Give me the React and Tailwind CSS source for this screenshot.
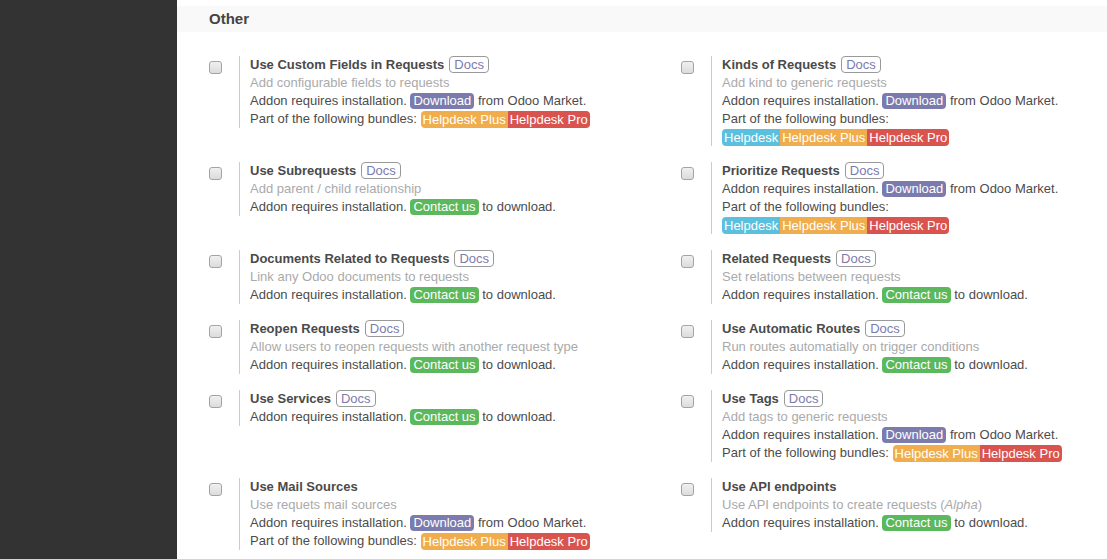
import React from "react";

const bundleColors = {
  "Helpdesk": "bg-[#5bc0de]",
  "Helpdesk Plus": "bg-[#f0ad4e]",
  "Helpdesk Pro": "bg-[#d9534f]",
};

const items = [
  [
    { title: "Use Custom Fields in Requests", docs: true, desc: "Add configurable fields to requests", install: "download", bundles: ["Helpdesk Plus", "Helpdesk Pro"] },
    { title: "Kinds of Requests", docs: true, desc: "Add kind to generic requests", install: "download", bundles: ["Helpdesk", "Helpdesk Plus", "Helpdesk Pro"] },
  ],
  [
    { title: "Use Subrequests", docs: true, desc: "Add parent / child relationship", install: "contact" },
    { title: "Prioritize Requests", docs: true, install: "download", bundles: ["Helpdesk", "Helpdesk Plus", "Helpdesk Pro"] },
  ],
  [
    { title: "Documents Related to Requests", docs: true, desc: "Link any Odoo documents to requests", install: "contact" },
    { title: "Related Requests", docs: true, desc: "Set relations between requests", install: "contact" },
  ],
  [
    { title: "Reopen Requests", docs: true, desc: "Allow users to reopen requests with another request type", install: "contact" },
    { title: "Use Automatic Routes", docs: true, desc: "Run routes automatially on trigger conditions", install: "contact" },
  ],
  [
    { title: "Use Services", docs: true, install: "contact" },
    { title: "Use Tags", docs: true, desc: "Add tags to generic requests", install: "download", bundles: ["Helpdesk Plus", "Helpdesk Pro"] },
  ],
  [
    { title: "Use Mail Sources", desc: "Use requets mail sources", install: "download", bundles: ["Helpdesk Plus", "Helpdesk Pro"] },
    { title: "Use API endpoints", desc: <>Use API endpoints to create requests (<i>Alpha</i>)</>, install: "contact" },
  ],
];

function Checkbox() {
  return (
    <span className="block w-[13px] h-[13px] rounded-[3px] border border-[#a3a3a3] bg-gradient-to-b from-[#f0f0f0] to-[#dcdcdc]" />
  );
}

function SettingBox({ item }) {
  return (
    <div className="flex items-start">
      <div className="w-[30px] shrink-0 pt-[5px]">
        <Checkbox />
      </div>
      <div className="border-l border-[#cccccc] pl-[10px] leading-[18px]">
        <div>
          <span className="font-bold text-[#4a4a4a]">{item.title}</span>
          {item.docs && (
            <span className="ml-[5px] inline-block border border-[#999] rounded-[4px] px-[4px] leading-[15px] text-[#7c7bad]">
              Docs
            </span>
          )}
        </div>
        {item.desc && <div className="text-[#aaaaaa]">{item.desc}</div>}
        {item.install === "download" ? (
          <div>
            Addon requires installation.{" "}
            <span className="inline-block bg-[#7c7bad] text-white rounded-[4px] px-[3px] leading-[16px]">Download</span>{" "}
            from Odoo Market.
          </div>
        ) : (
          <div>
            Addon requires installation.{" "}
            <span className="inline-block bg-[#5cb85c] text-white rounded-[4px] px-[3px] leading-[16px]">Contact us</span>{" "}
            to download.
          </div>
        )}
        {item.bundles && (
          <div>
            Part of the following bundles:{" "}
            <span className="inline-flex align-top mt-[1px]">
              {item.bundles.map((b, i) => (
                <span
                  key={b}
                  className={`${bundleColors[b]} text-white px-[2px] leading-[17px] ${i === 0 ? "rounded-l-[4px]" : ""} ${i === item.bundles.length - 1 ? "rounded-r-[4px]" : ""}`}
                >
                  {b}
                </span>
              ))}
            </span>
          </div>
        )}
      </div>
    </div>
  );
}

export default function App() {
  return (
    <div className="flex w-[1107px] h-[559px] overflow-hidden bg-white text-[13px] text-[#4c4c4c]" style={{ fontFamily: "'Liberation Sans', Arial, sans-serif" }}>
      <aside className="w-[177px] shrink-0 bg-[#333333]" />
      <main className="flex-1 pt-[6px]">
        <div className="h-[26px] bg-[#f9f9f9] pl-[32px] flex items-center">
          <h2 className="text-[15px] font-bold text-[#444]">Other</h2>
        </div>
        <div className="pt-[24px] pl-[32px] grid grid-cols-[472px_1fr] items-start gap-y-4">
          {items.map((row, r) => (
            <React.Fragment key={r}>
              <SettingBox item={row[0]} />
              <SettingBox item={row[1]} />
            </React.Fragment>
          ))}
        </div>
      </main>
    </div>
  );
}
